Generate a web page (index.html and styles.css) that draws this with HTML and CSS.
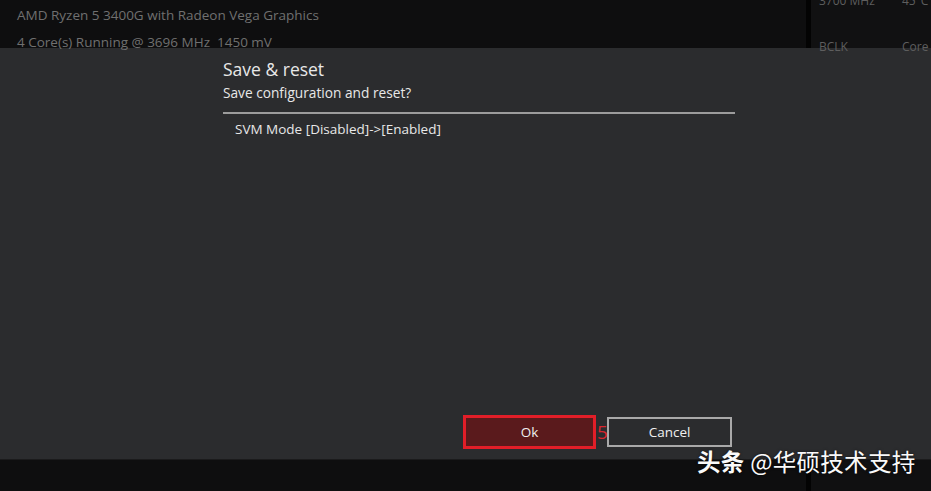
FILE: index.html
```html
<!DOCTYPE html>
<html lang="en">
<head>
  <meta charset="UTF-8">
  <title>Save &amp; reset</title>
  <link rel="stylesheet" href="styles.css">
</head>
<body>
  <div class="screen">
    <!-- top info bar -->
    <div class="header">
      <div class="cpu-info">
        <div class="info-line">AMD Ryzen 5 3400G with Radeon Vega Graphics</div>
        <div class="info-line">4 Core(s) Running @ 3696 MHz&nbsp; 1450 mV</div>
      </div>
      <div class="side-panel">
        <div class="side-row side-row-top">
          <span>3700 MHz</span>
          <span>45°C</span>
        </div>
        <div class="side-row">
          <span>BCLK</span>
          <span>Core</span>
        </div>
      </div>
    </div>

    <!-- dialog overlay -->
    <div class="overlay">
      <div class="dialog">
        <div class="dialog-title">Save &amp; reset</div>
        <div class="dialog-sub">Save configuration and reset?</div>
        <div class="change-list">
          <div class="change-item">SVM Mode [Disabled]-&gt;[Enabled]</div>
        </div>
        <div class="actions">
          <button class="btn btn-ok">Ok</button>
          <span class="step">5</span>
          <button class="btn btn-cancel">Cancel</button>
        </div>
      </div>
    </div>

    <div class="footer">
      <div class="footer-main"></div>
      <div class="footer-side"></div>
    </div>

    <div class="watermark"><b>头条</b> @华硕技术支持</div>
  </div>
</body>
</html>
```

FILE: styles.css
```css
body {
  margin: 0;
  background: #0e0e0f;
  font-family: "Open Sans", "Noto Sans", sans-serif;
}

.screen {
  position: relative;
  width: 931px;
  height: 491px;
  overflow: hidden;
}

.header {
  display: flex;
  height: 48px;
}

.cpu-info {
  flex: 1;
  padding: 4px 0 0 17px;
  color: #707070;
  font-size: 13.5px;
}

.info-line {
  height: 27px;
  line-height: 22px;
}

.side-panel {
  width: 120px;
  border-left: 5px solid #030303;
  background: #111112;
  color: #5e5e5e;
  font-size: 12px;
}

.side-row {
  display: flex;
  justify-content: space-between;
  padding: 0 0 0 8px;
  height: 20px;
  line-height: 20px;
  margin-top: 26px;
}

.side-row-top {
  margin-top: -9px;
  margin-bottom: 0;
}

.side-row span:last-child {
  width: 29px;
}

.overlay {
  height: 411px;
  background: #2b2c2e;
}

.dialog {
  display: flex;
  flex-direction: column;
  width: 512px;
  height: 100%;
  margin-left: 223px;
  color: #e8e8e8;
}

.dialog-title {
  margin-top: 9px;
  font-size: 17.5px;
  line-height: 24px;
}

.dialog-sub {
  margin-top: 2px;
  font-size: 13.7px;
  line-height: 20px;
}

.change-list {
  flex: 1;
  margin-top: 9px;
  border-top: 2px solid #9c9c9c;
  padding: 5px 0 0 12px;
}

.change-item {
  font-size: 13.5px;
  line-height: 20px;
}

.actions {
  display: flex;
  align-items: center;
  justify-content: flex-end;
  padding: 0 3px 10px 0;
}

.btn {
  box-sizing: border-box;
  height: 30px;
  width: 125px;
  font-family: "Open Sans", "Noto Sans", sans-serif;
  font-size: 13.5px;
  color: #f0f0f0;
  padding: 0;
}

.btn-ok {
  width: 133px;
  height: 34px;
  border: 3px solid #e21e28;
  background: #5a1a1c;
}

.btn-cancel {
  border: 2px solid #a9a9a9;
  background: #2b2c2e;
}

.step {
  width: 10px;
  color: #d8262e;
  font-size: 19px;
  line-height: 20px;
  padding-left: 1px;
}

.footer {
  display: flex;
  height: 32px;
  border-top: 1px solid #1b1b1c;
}

.footer-main {
  flex: 1;
}

.footer-side {
  width: 120px;
  border-left: 5px solid #030303;
  background: #101011;
}

.watermark {
  position: absolute;
  left: 697px;
  top: 446px;
  color: #fafafa;
  font-family: "Noto Sans CJK SC", sans-serif;
  font-size: 23.5px;
  line-height: 30px;
  letter-spacing: 0.3px;
  text-shadow: 0 0 3px rgba(0, 0, 0, 0.6);
}

.watermark b {
  font-weight: 700;
}
```
